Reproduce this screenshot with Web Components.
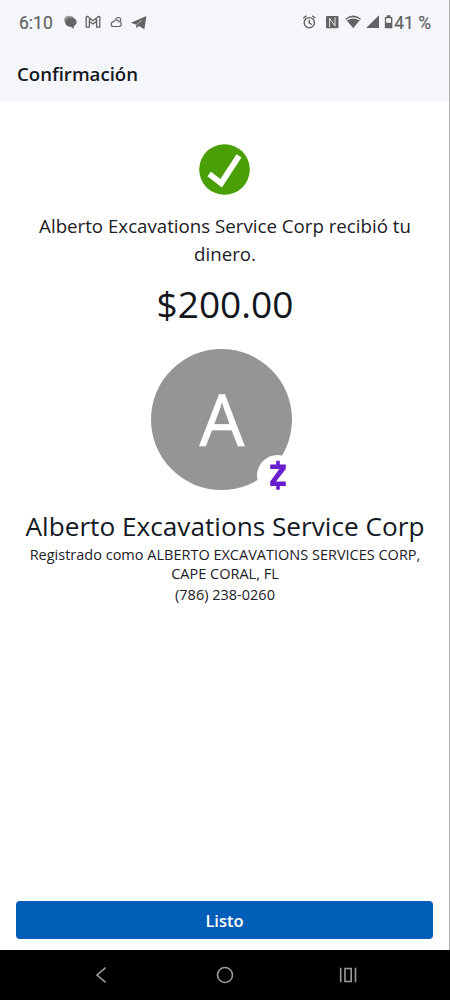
<!DOCTYPE html>
<html lang="es">
<head>
<meta charset="utf-8">
<meta name="viewport" content="width=device-width, initial-scale=1">
<title>Confirmación</title>
<style>
  body {
    margin: 0;
    background: #fff;
    font-family: 'Open Sans', 'Noto Sans', sans-serif;
    color: #1b2026;
  }
</style>
</head>
<body>
<phone-screen>
  <status-bar slot="top" time="6:10" battery="41 %"></status-bar>
  <page-header slot="top">Confirmación</page-header>
  <payment-result amount="$200.00">Alberto Excavations Service Corp recibió tu dinero.</payment-result>
  <contact-card initial="A">
    <span slot="name">Alberto Excavations Service Corp</span>
    <span slot="registered">Registrado como ALBERTO EXCAVATIONS SERVICES CORP, CAPE CORAL, FL</span>
    <span slot="phone">(786) 238-0260</span>
  </contact-card>
  <action-button slot="bottom">Listo</action-button>
  <nav-buttons slot="bottom"></nav-buttons>
</phone-screen>

<script>
class PhoneScreen extends HTMLElement {
  constructor() {
    super();
    const shadow = this.attachShadow({ mode: 'open' });
    shadow.innerHTML = `
      <style>
        :host {
          display: flex;
          flex-direction: column;
          height: 1000px;
          width: 450px;
          overflow: hidden;
          background: linear-gradient(#adafb1, #adafb1) right top / 1px 100% no-repeat #fff;
        }
        main { flex: 1; }
      </style>
      <slot name="top"></slot>
      <main><slot></slot></main>
      <slot name="bottom"></slot>
    `;
  }
}

class StatusBar extends HTMLElement {
  constructor() {
    super();
    const shadow = this.attachShadow({ mode: 'open' });
    shadow.innerHTML = `
      <style>
        :host {
          display: flex;
          justify-content: space-between;
          box-sizing: border-box;
          height: 46px;
          margin-right: 1px;
          padding: 0 18px 0 19px;
          background: #f5f6f9;
          color: #626365;
          font: 400 17.5px/46px Roboto, sans-serif;
        }
        div { display: flex; align-items: center; }
        svg { display: block; fill: currentColor; margin-top: -2px; }
        .time { width: 44px; white-space: nowrap; -webkit-text-stroke: .2px; }
        .level { white-space: nowrap; -webkit-text-stroke: .2px; }
      </style>
      <div>
        <span class="time">${this.getAttribute('time')}</span>
        <!-- chat, mail, weather, telegram -->
        <svg width="84" height="16" viewBox="63 14 84 16">
          <path opacity=".6" d="M64 20q.5-4.200 5-4.200 4 0 5 2.200l-2 3-7 2z"/>
          <path d="M70.800 17.700c3.600 0 5.800 1.800 5.800 4.300 0 2.200-1.300 3.400-2.700 4l-.4 2.900-2.500-2.200c-3.600.1-5.700-1.900-5.700-4.500 0-2.700 2-4.500 5.500-4.500z"/>
          <path fill="none" stroke="currentColor" stroke-width="1.300" stroke-linejoin="round" d="M86.200 27.200v-9.700q0-1.300 1.500-1l5.300 4.200 5.300-4.200q1.500-.3 1.500 1v9.700h-3.200v-6l-3.600 2.800-3.600-2.800v6zM89.400 21.200v-3.400M96.600 21.200v-3.400"/>
          <path fill="none" stroke="currentColor" stroke-width="1.150" d="M113.500 26.500a2.300 2.300 0 0 1 0-4.600 3 3 0 0 1 5.600-.2c1.600.1 2.200 1.200 2.200 2.400 0 1.400-.9 2.400-2.300 2.400zM115.700 18.700q2-1.700 3.800-.9c1.700.9 1.700 2.400.5 3.600"/>
          <path d="M146.500 16 144.300 29.300 139 26 136.200 28.300V24.800L131 22.700z"/>
          <path fill="none" stroke="#f5f6f9" stroke-width=".6" d="M136.500 24.700 142 20.200"/>
        </svg>
      </div>
      <div>
        <!-- alarm, nfc, wifi, signal, battery -->
        <svg width="92" height="16" viewBox="302 14 92 16">
          <g fill="none" stroke="currentColor" stroke-width="1.400">
            <circle cx="309.300" cy="22.700" r="5.100"/>
            <path d="M309.300 19.700v3.400l2.400 1.400M303.400 18.100l3-2.400M315.200 18.100l-3-2.400"/>
          </g>
          <rect x="326" y="16" width="12.500" height="12.300" rx="1"/>
          <path fill="none" stroke="#f5f6f9" stroke-width=".9" d="M329.600 27v-8.800l5.400 7.900v-8.800"/>
          <path d="M345.400 18.700q7.900-6.300 15.600 0l-7.800 9.500z"/>
          <path fill="none" stroke="#f5f6f9" stroke-width="1.250" d="M346.800 19.800q6.400-4 12.800 0"/>
          <path d="M379 15.200v12.900h-12.900z"/>
          <path fill="none" stroke="currentColor" stroke-width="1.300" d="M385.500 17.600h6.200v10h-6.200z"/>
          <path d="M386.700 15.300h3.800v2.300h-3.800zM385.500 22.700h6.200v5h-6.200z"/>
        </svg>
        <span class="level">${this.getAttribute('battery')}</span>
      </div>
    `;
  }
}

class PageHeader extends HTMLElement {
  constructor() {
    super();
    const shadow = this.attachShadow({ mode: 'open' });
    shadow.innerHTML = `
      <style>
        :host {
          display: block;
          height: 56px;
          margin-right: 1px;
          padding-left: 17px;
          background: #f5f6f9;
          color: #14191f;
          font-size: 18.600px;
          font-weight: 600;
          line-height: 55px;
        }
      </style>
      <slot></slot>
    `;
  }
}

class PaymentResult extends HTMLElement {
  constructor() {
    super();
    const shadow = this.attachShadow({ mode: 'open' });
    shadow.innerHTML = `
      <style>
        :host {
          display: flex;
          flex-direction: column;
          align-items: center;
          padding: 42px 30px 0;
          text-align: center;
        }
        svg { margin-right: 1px; }
        p {
          margin: 17px 0 0;
          font-size: 18.700px;
          line-height: 28px;
        }
        .amount {
          margin-top: 9px;
          font-size: 37.100px;
          line-height: 54px;
          color: #12171d;
        }
      </style>
      <svg width="51" height="51" viewBox="0 0 51 51">
        <circle cx="25.500" cy="25.500" r="25.300" fill="#4b9f06"/>
        <path d="M10.200 30 22.200 39.200 40 11.800" fill="none" stroke="#fff" stroke-width="5.800"/>
      </svg>
      <p><slot></slot></p>
      <div class="amount">${this.getAttribute('amount')}</div>
    `;
  }
}

class ContactCard extends HTMLElement {
  constructor() {
    super();
    const shadow = this.attachShadow({ mode: 'open' });
    shadow.innerHTML = `
      <style>
        :host {
          display: flex;
          flex-direction: column;
          align-items: center;
          padding: 17.500px 20px 0;
          text-align: center;
        }
        .avatar {
          position: relative;
          width: 141px;
          height: 141px;
          margin-right: 7px;
          border-radius: 50%;
          background: #959595;
          color: #fff;
          font-size: 71px;
          line-height: 140px;
          text-indent: 1px;
          -webkit-text-stroke: .7px;
        }
        /* Zelle badge over the avatar's corner */
        .badge {
          position: absolute;
          left: 106px;
          top: 106.500px;
        }
        .name {
          margin-top: 17px;
          font-size: 26.200px;
          line-height: 38px;
          color: #14191f;
          white-space: nowrap;
        }
        .registered {
          font-size: 14.500px;
          line-height: 19.500px;
        }
        .phone {
          margin-top: 1px;
          font-size: 14.500px;
          line-height: 20px;
        }
      </style>
      <div class="avatar">
        ${this.getAttribute('initial')}
        <svg class="badge" width="41" height="41" viewBox="0 0 41 41">
          <circle cx="20.500" cy="20.500" r="20.500" fill="#fff"/>
          <path fill="#6a1fcf" d="M19.200 5.800h3.600v3.700h6v4.600L19 26.500h9.800v4.600h-6v3.700h-3.600v-3.700h-6v-4.600L22.300 14.100h-9.100V9.500h6z"/>
        </svg>
      </div>
      <div class="name"><slot name="name"></slot></div>
      <div class="registered"><slot name="registered"></slot></div>
      <div class="phone"><slot name="phone"></slot></div>
    `;
  }
}

class ActionButton extends HTMLElement {
  constructor() {
    super();
    const shadow = this.attachShadow({ mode: 'open' });
    shadow.innerHTML = `
      <style>
        :host {
          display: block;
          padding: 0 17px 11px 16px;
        }
        button {
          display: block;
          width: 100%;
          height: 38px;
          padding: 1px 0 0;
          border: 0;
          border-radius: 4px;
          background: #015eb8;
          color: #fff;
          font: 600 16.500px/37px 'Open Sans', 'Noto Sans', sans-serif;
        }
      </style>
      <button type="button"><slot></slot></button>
    `;
  }
}

class NavButtons extends HTMLElement {
  constructor() {
    super();
    const shadow = this.attachShadow({ mode: 'open' });
    shadow.innerHTML = `
      <style>
        :host {
          display: flex;
          align-items: center;
          justify-content: space-between;
          box-sizing: border-box;
          height: 50px;
          padding: 0 92px 0 91px;
          background: #000;
        }
        svg {
          fill: none;
          stroke: #9a9a9a;
          stroke-width: 1.600;
        }
      </style>
      <svg width="20" height="20" viewBox="0 0 20 20"><path d="M14.600 2.700 6 10l8.600 7.400"/></svg>
      <svg width="20" height="20" viewBox="0 0 20 20"><circle cx="10" cy="10" r="7.500"/></svg>
      <svg width="20" height="20" viewBox="0 0 20 20"><path d="M2.700 2.700v14.600M17.500 2.700v14.600M7 3.500h6.200v13H7z"/></svg>
    `;
  }
}

customElements.define('phone-screen', PhoneScreen);
customElements.define('status-bar', StatusBar);
customElements.define('page-header', PageHeader);
customElements.define('payment-result', PaymentResult);
customElements.define('contact-card', ContactCard);
customElements.define('action-button', ActionButton);
customElements.define('nav-buttons', NavButtons);
</script>
</body>
</html>
